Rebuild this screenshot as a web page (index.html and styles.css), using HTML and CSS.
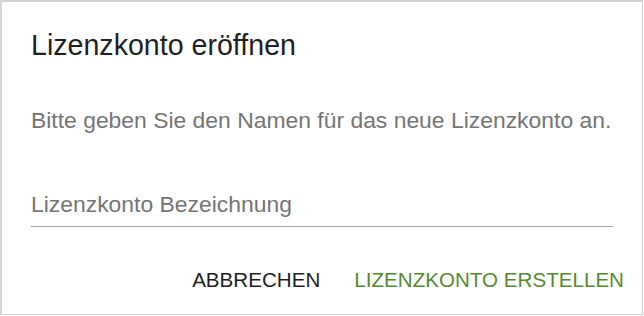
FILE: index.html
```html
<!DOCTYPE html>
<html lang="de">
<head>
<meta charset="utf-8">
<title>Lizenzkonto eröffnen</title>
<link rel="stylesheet" href="styles.css">
</head>
<body>
<div class="dialog">
  <h1 class="dialog-title">Lizenzkonto eröffnen</h1>
  <p class="dialog-text">Bitte geben Sie den Namen für das neue Lizenzkonto an.</p>
  <div class="field">
    <span class="field-placeholder">Lizenzkonto Bezeichnung</span>
  </div>
  <div class="dialog-actions">
    <button class="btn btn-cancel" type="button">ABBRECHEN</button>
    <button class="btn btn-primary" type="button">LIZENZKONTO ERSTELLEN</button>
  </div>
</div>
</body>
</html>
```

FILE: styles.css
```css
html, body {
  margin: 0;
  padding: 0;
  background: #ffffff;
}

.dialog {
  box-sizing: border-box;
  width: 643px;
  height: 315px;
  border-top: 2px solid #d3d3d3;
  border-left: 2px solid #d3d3d3;
  border-right: 1px solid #d3d3d3;
  border-bottom: 1px solid #d3d3d3;
  background: #ffffff;
  padding: 27px 29px 0 29px;
  font-family: "Liberation Sans", Arial, sans-serif;
  display: flex;
  flex-direction: column;
}

.dialog-title {
  margin: 0;
  font-size: 28.6px;
  line-height: 32px;
  font-weight: 400;
  color: #1f1f1f;
}

.dialog-text {
  margin: 45px 0 0;
  font-size: 22.9px;
  line-height: 28px;
  color: #757575;
}

.field {
  margin-top: 56px;
  padding-bottom: 8px;
  border-bottom: 1px solid #a0a0a0;
}

.field-placeholder {
  display: block;
  font-size: 22.9px;
  line-height: 28px;
  color: #757575;
}

.dialog-actions {
  margin-top: 41px;
  margin-right: -11px;
  display: flex;
  justify-content: flex-end;
  gap: 34px;
}

.btn {
  border: 0;
  background: none;
  padding: 0;
  margin: 0;
  font-family: "Liberation Sans", Arial, sans-serif;
  font-size: 20.6px;
  line-height: 24px;
  cursor: pointer;
}

.btn-cancel {
  color: #1f1f1f;
}

.btn-primary {
  color: #558b2f;
}
```
